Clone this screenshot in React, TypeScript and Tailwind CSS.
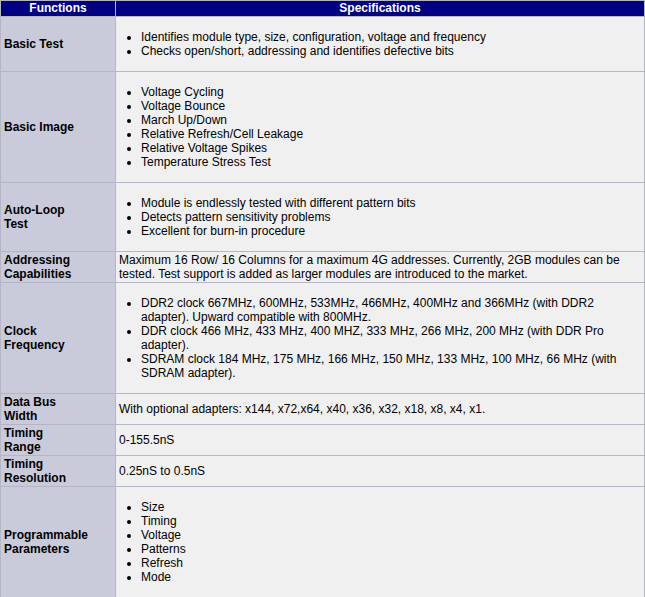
const rows: { f: string[]; s: string[] | string }[] = [
  { f: ["Basic Test"], s: ["Identifies module type, size, configuration, voltage and frequency", "Checks open/short, addressing and identifies defective bits"] },
  { f: ["Basic Image"], s: ["Voltage Cycling", "Voltage Bounce", "March Up/Down", "Relative Refresh/Cell Leakage", "Relative Voltage Spikes", "Temperature Stress Test"] },
  { f: ["Auto-Loop", "Test"], s: ["Module is endlessly tested with different pattern bits", "Detects pattern sensitivity problems", "Excellent for burn-in procedure"] },
  { f: ["Addressing", "Capabilities"], s: "Maximum 16 Row/ 16 Columns for a maximum 4G addresses. Currently, 2GB modules can be tested. Test support is added as larger modules are introduced to the market." },
  { f: ["Clock", "Frequency"], s: ["DDR2 clock 667MHz, 600MHz, 533MHz, 466MHz, 400MHz and 366MHz (with DDR2 adapter). Upward compatible with 800MHz.", "DDR clock 466 MHz, 433 MHz, 400 MHZ, 333 MHz, 266 MHz, 200 MHz (with DDR Pro adapter).", "SDRAM clock 184 MHz, 175 MHz, 166 MHz, 150 MHz, 133 MHz, 100 MHz, 66 MHz (with SDRAM adapter)."] },
  { f: ["Data Bus", "Width"], s: "With optional adapters: x144, x72,x64, x40, x36, x32, x18, x8, x4, x1." },
  { f: ["Timing", "Range"], s: "0-155.5nS" },
  { f: ["Timing", "Resolution"], s: "0.25nS to 0.5nS" },
  { f: ["Programmable", "Parameters"], s: ["Size", "Timing", "Voltage", "Patterns", "Refresh", "Mode"] },
];

export default function App() {
  return (
    <div className="w-[645px] bg-white text-[12px] leading-[14px] text-black" style={{ fontFamily: '"Liberation Sans", Arial, sans-serif' }}>
      <table className="w-full border-separate border-spacing-[1px] bg-[#b4b6c6]">
        <thead>
          <tr className="bg-[#000080] text-white font-bold">
            <th className="w-[114px] py-0 leading-[15px] text-center">Functions</th>
            <th className="py-0 leading-[15px] text-center">Specifications</th>
          </tr>
        </thead>
        <tbody>
          {rows.map((r) => (
            <tr key={r.f.join(" ")}>
              <td className="bg-[#c9cbdb] px-[3px] py-[1px] font-bold align-middle">
                {r.f.map((l, i) => (
                  <div key={i}>{l}</div>
                ))}
              </td>
              <td className="bg-[#f0f0f0] px-[3px] py-[1px] align-middle">
                {Array.isArray(r.s) ? (
                  <ul className="my-[12px] pl-[22px] list-disc">
                    {r.s.map((i) => (
                      <li key={i}>{i}</li>
                    ))}
                  </ul>
                ) : (
                  r.s
                )}
              </td>
            </tr>
          ))}
        </tbody>
      </table>
    </div>
  );
}
